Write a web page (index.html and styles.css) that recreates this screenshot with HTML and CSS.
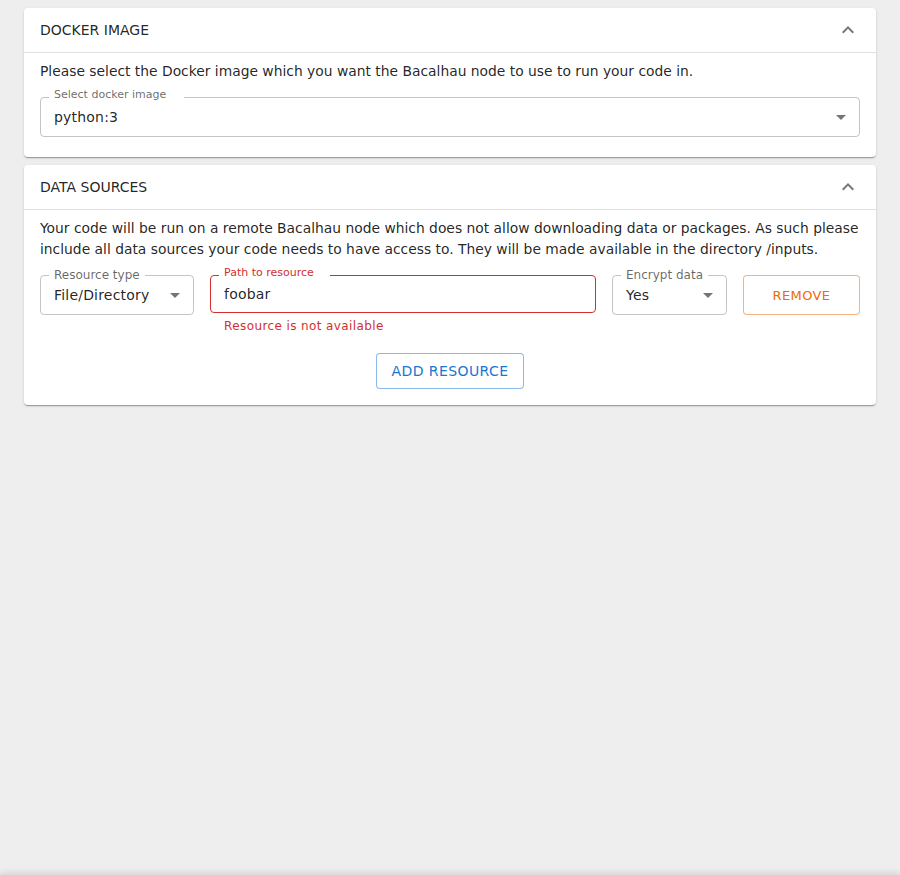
FILE: index.html
```html
<!DOCTYPE html>
<html>
<head>
<meta charset="utf-8">
<link rel="stylesheet" href="styles.css">
</head>
<body>
<main class="page">
  <section class="card">
    <header class="card-head">
      <span class="card-title">DOCKER IMAGE</span>
      <svg class="chev" viewBox="0 0 24 24" width="24" height="24"><path d="M12 8l-6 6 1.41 1.41L12 10.83l4.59 4.58L18 14z"/></svg>
    </header>
    <div class="card-body">
      <p class="desc">Please select the Docker image which you want the Bacalhau node to use to run your code in.</p>
      <div class="field">
        <label class="flabel lab-text">Select docker image</label>
        <span class="val">python:3</span>
        <svg class="arrow" viewBox="0 0 24 24" width="24" height="24"><path d="M7 10l5 5 5-5z"/></svg>
        <fieldset class="outline"><legend class="notch notch-text"><span>Select docker image</span></legend></fieldset>
      </div>
    </div>
  </section>

  <section class="card">
    <header class="card-head">
      <span class="card-title">DATA SOURCES</span>
      <svg class="chev" viewBox="0 0 24 24" width="24" height="24"><path d="M12 8l-6 6 1.41 1.41L12 10.83l4.59 4.58L18 14z"/></svg>
    </header>
    <div class="card-body">
      <p class="desc">Your code will be run on a remote Bacalhau node which does not allow downloading data or packages. As such please include all data sources your code needs to have access to. They will be made available in the directory /inputs.</p>
      <div class="row">
        <div class="field w-type">
          <label class="flabel lab-sel">Resource type</label>
          <span class="val">File/Directory</span>
          <svg class="arrow" viewBox="0 0 24 24" width="24" height="24"><path d="M7 10l5 5 5-5z"/></svg>
          <fieldset class="outline"><legend class="notch"><span>Resource type</span></legend></fieldset>
        </div>
        <div class="path-col">
          <div class="field error">
            <label class="flabel lab-text">Path to resource</label>
            <span class="val">foobar</span>
            <fieldset class="outline"><legend class="notch notch-text"><span>Path to resource</span></legend></fieldset>
          </div>
          <div class="helper">Resource is not available</div>
        </div>
        <div class="field w-enc">
          <label class="flabel lab-sel">Encrypt data</label>
          <span class="val">Yes</span>
          <svg class="arrow" viewBox="0 0 24 24" width="24" height="24"><path d="M7 10l5 5 5-5z"/></svg>
          <fieldset class="outline"><legend class="notch"><span>Encrypt data</span></legend></fieldset>
        </div>
        <button class="btn btn-remove">REMOVE</button>
      </div>
      <div class="add-wrap">
        <button class="btn btn-add">ADD RESOURCE</button>
      </div>
    </div>
  </section>
</main>
<div class="bottom-shadow"></div>
</body>
</html>
```

FILE: styles.css
```css
* { box-sizing: border-box; }
html, body {
  margin: 0;
  padding: 0;
  background: #eeeeee;
  height: 100%;
}
body {
  font-family: "DejaVu Sans", sans-serif;
  color: rgba(0, 0, 0, 0.87);
  font-size: 14px;
  overflow: hidden;
}
.page {
  padding: 8px 24px;
  display: flex;
  flex-direction: column;
  gap: 8px;
}
.card {
  background: #fff;
  border-radius: 4px;
  box-shadow: 0 2px 1px -1px rgba(0,0,0,0.2), 0 1px 1px 0 rgba(0,0,0,0.14), 0 1px 3px 0 rgba(0,0,0,0.12);
}
.card-head {
  height: 45px;
  display: flex;
  align-items: center;
  justify-content: space-between;
  padding: 0 16px;
  border-bottom: 1px solid #e0e0e0;
}
.card-title {
  font-size: 14px;
}
.chev { fill: rgba(0,0,0,0.54); width: 24px; height: 24px; }
.card-body {
  padding: 8px 16px 20px;
}
.desc {
  margin: 0 0 15px;
  line-height: 21px;
  font-size: 13.85px;
}
.field {
  position: relative;
  height: 40px;
  padding: 0 14px;
  display: flex;
  align-items: center;
}
.field .val {
  font-size: 14px;
  letter-spacing: 0.2px;
  position: relative;
  z-index: 1;
}
.outline {
  position: absolute;
  left: 0;
  right: 0;
  bottom: 0;
  top: -5px;
  margin: 0;
  padding: 0 8px;
  border: 1px solid rgba(0,0,0,0.23);
  border-radius: 4px;
  pointer-events: none;
  min-width: 0;
}
.notch {
  float: unset;
  width: auto;
  padding: 0;
  height: 11px;
  font-size: 12px;
  visibility: hidden;
  white-space: nowrap;
  line-height: 11px;
}
.notch span {
  padding: 0 5px;
  display: inline-block;
}
.notch-text span { padding-right: 8px; }
.flabel {
  position: absolute;
  left: 14px;
  top: -6px;
  color: rgba(0,0,0,0.6);
  white-space: nowrap;
  line-height: 1;
  z-index: 1;
}
.lab-text { font-size: 11px; top: -8px; }
.lab-sel { font-size: 12px; }
.arrow {
  position: absolute;
  right: 7px;
  top: 8px;
  fill: rgba(0,0,0,0.54);
}
.row {
  display: flex;
  gap: 16px;
  align-items: flex-start;
}
.w-type { width: 154px; flex: none; }
.path-col { flex: 1; }
.w-enc { width: 115px; flex: none; }
.error { height: 38px; }
.error .outline { border-color: #d32f2f; }
.error .flabel { color: #d32f2f; }
.helper {
  color: #d32f2f;
  font-size: 12px;
  letter-spacing: 0.4px;
  margin: 4px 14px 0;
  line-height: 18px;
}
.btn {
  font-family: inherit;
  background: #fff;
  border-radius: 4px;
  font-size: 14px;
  letter-spacing: 0.4px;
  cursor: pointer;
}
.btn-remove {
  width: 117px;
  height: 40px;
  flex: none;
  color: #ed6c02;
  border: 1px solid rgba(237,108,2,0.5);
  font-size: 13px;
}
.add-wrap {
  display: flex;
  justify-content: center;
  margin-top: 18px;
}
.btn-add {
  height: 36px;
  padding: 0 15px;
  color: #1976d2;
  border: 1px solid rgba(25,118,210,0.5);
}
.card:last-child .card-body { padding-bottom: 16px; }
.bottom-shadow {
  position: fixed;
  left: 0;
  right: 0;
  top: 100%;
  height: 20px;
  box-shadow: 0 -2px 6px rgba(0,0,0,0.12);
}
```
